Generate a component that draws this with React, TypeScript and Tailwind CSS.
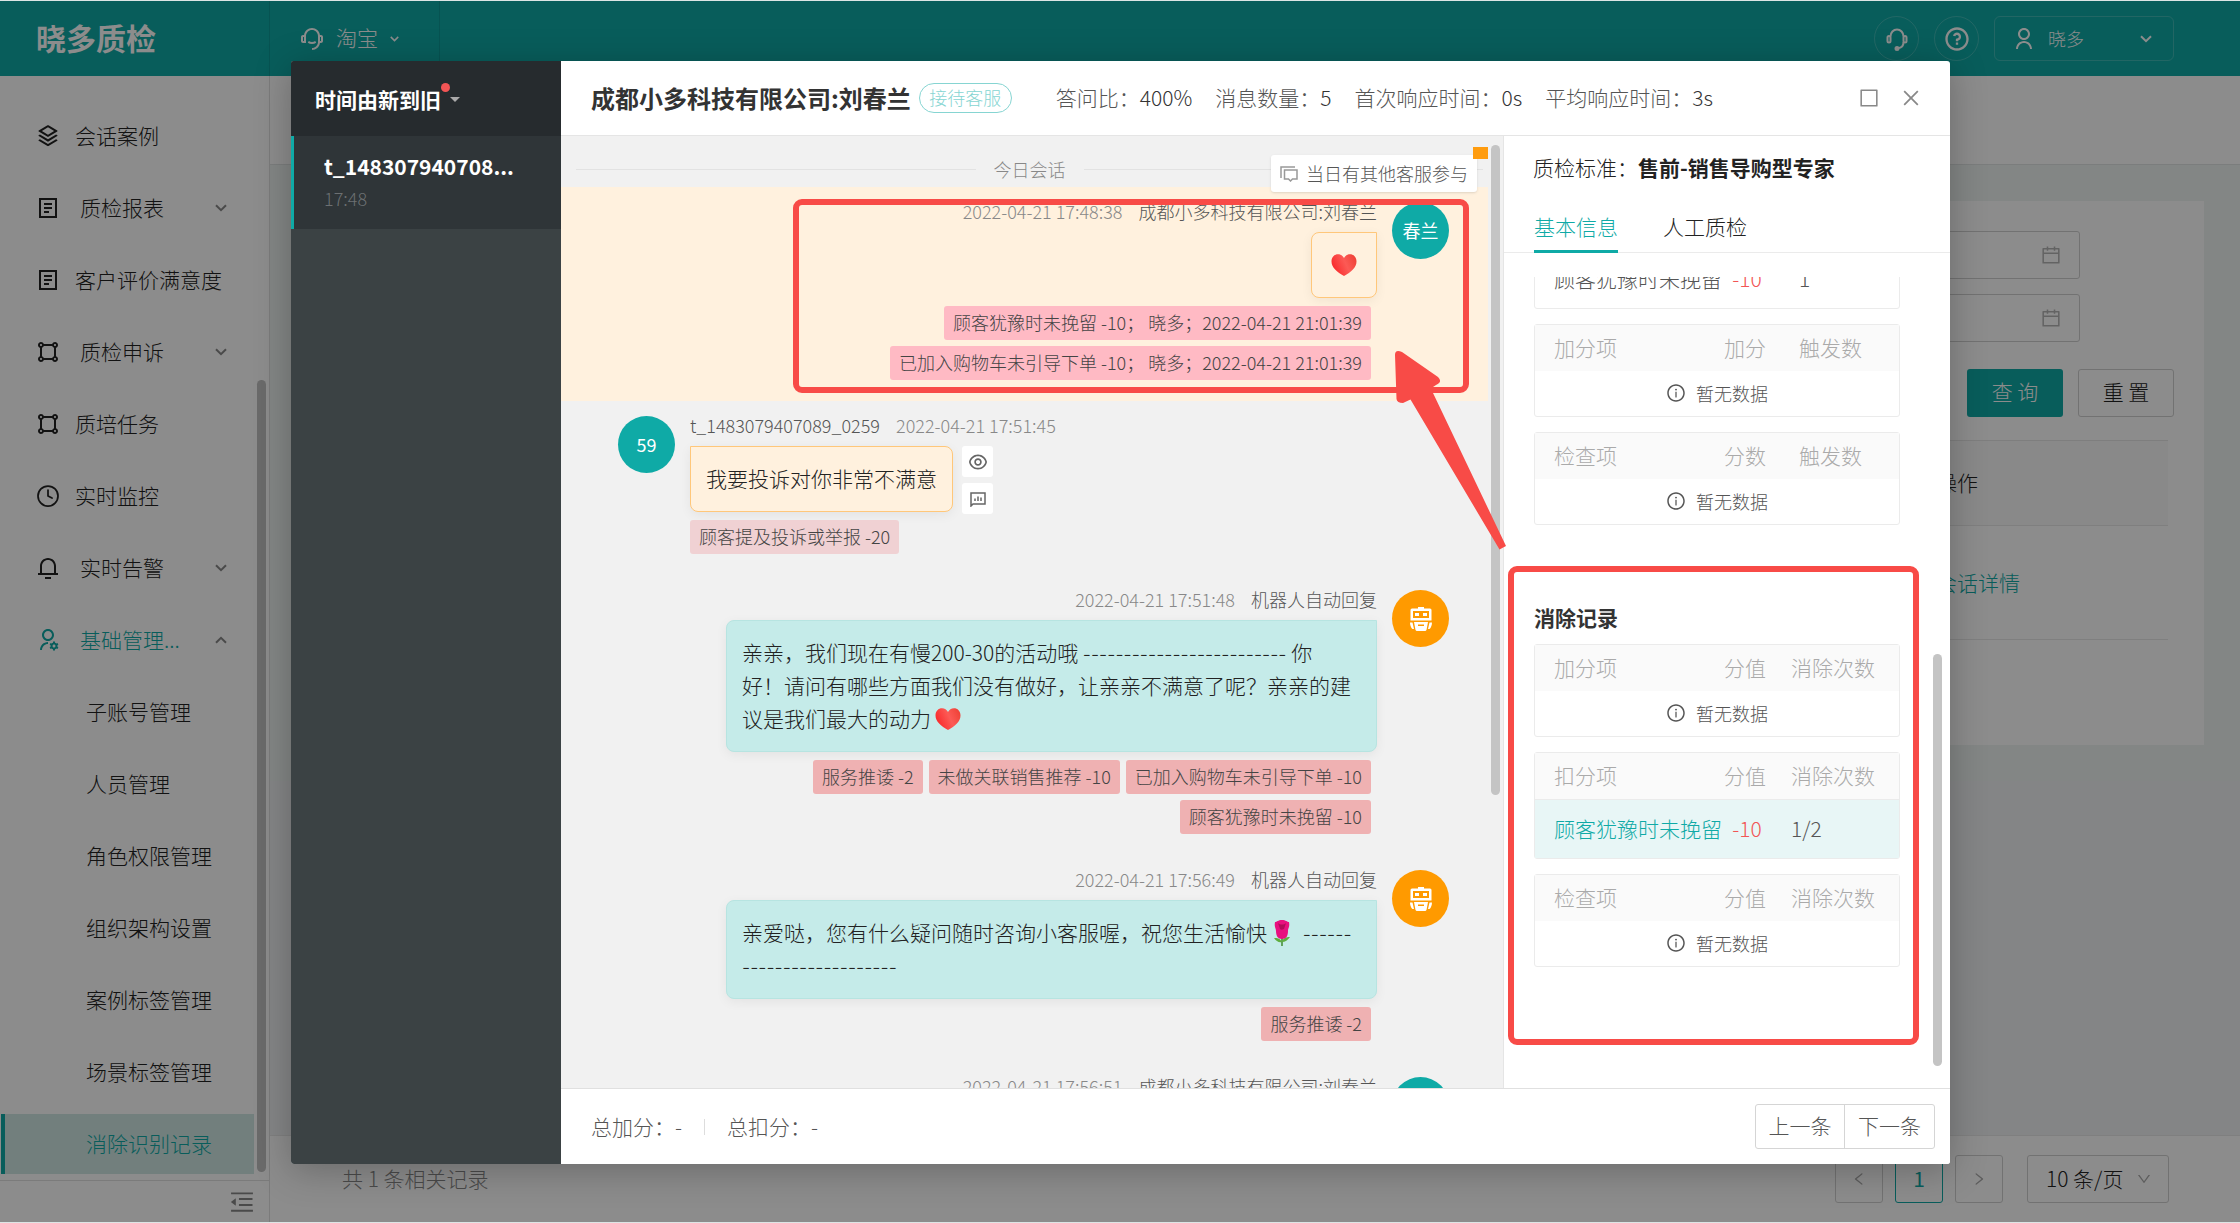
import React from 'react';
import { Clock } from 'lucide-react';
import { AiOutlineBorder, AiOutlineCalendar, AiOutlineClose, AiOutlineInfoCircle, AiOutlineLeft, AiOutlineMenuFold, AiOutlineRight, AiOutlineDown } from 'react-icons/ai';
import {
  RiCustomerService2Line,
  RiEyeLine,
  RiNotification3Line,
  RiQuestionLine,
  RiShapeLine,
  RiStackLine,
  RiUserLine,
  RiUserSettingsLine,
} from 'react-icons/ri';

interface IconProps {
  className?: string;
}

interface MenuItem {
  label: string;
  icon?: React.ComponentType<IconProps>;
  expand?: 'down' | 'up';
  active?: boolean;
}

const Report = ({ className }: IconProps) => (
  <svg viewBox="0 0 24 24" fill="none" stroke="currentColor" strokeWidth="2" className={className}>
    <path d="M4 3h16v18H4zM8 8h8M8 12h8M8 16h5" />
  </svg>
);

const ThinClock = ({ className }: IconProps) => <Clock strokeWidth={1.75} className={className} />;

const menuItems: MenuItem[] = [
  { label: '会话案例', icon: RiStackLine },
  { label: '质检报表', icon: Report, expand: 'down' },
  { label: '客户评价满意度', icon: Report },
  { label: '质检申诉', icon: RiShapeLine, expand: 'down' },
  { label: '质培任务', icon: RiShapeLine },
  { label: '实时监控', icon: ThinClock },
  { label: '实时告警', icon: RiNotification3Line, expand: 'down' },
  { label: '基础管理...', icon: RiUserSettingsLine, expand: 'up' },
  { label: '子账号管理' },
  { label: '人员管理' },
  { label: '角色权限管理' },
  { label: '组织架构设置' },
  { label: '案例标签管理' },
  { label: '场景标签管理' },
  { label: '消除识别记录', active: true },
];

const Chevron = ({ className }: IconProps) => (
  <svg viewBox="0 0 12 8" fill="none" stroke="currentColor" strokeWidth="2" className={className}>
    <path d="M1 1.2l5 5 5-5" />
  </svg>
);

const Headset = () => (
  <svg viewBox="0 0 22 24" fill="none" stroke="currentColor" strokeWidth="2" className="h-6 w-[22px]">
    <path d="M4.500 9.500a6.500 7 0 0 1 13 0M17.500 15c0 3.500-2 6-5.500 6" />
    <rect x="1.500" y="9" width="3" height="6.500" rx="1.500" />
    <rect x="17.500" y="9" width="3" height="6.500" rx="1.500" />
    <circle cx="11" cy="21.500" r="1.500" fill="currentColor" />
  </svg>
);

const Robot = () => (
  <svg viewBox="0 0 24 26" className="h-[26px] w-6">
    <path
      fill="#fff"
      fillRule="evenodd"
      d="M9 1h6v1.500h6a1.500 1.500 0 0 1 1.500 1.500v10.500h-21V4A1.500 1.500 0 0 1 3 2.500h6zM4 5v7h16V5z"
    />
    <path fill="#fff" d="M6 7h4v3H6zM14 7h4v3h-4zM1 16.500h2.500L5 23H3.500C2 22 1 19 1 16.500zM23 16.500h-2.500L19 23h1.500c1.500-1 2.500-4 2.500-6.500z" />
    <path fill="#fff" fillRule="evenodd" d="M5 16h14l-1.500 8-1 1h-9l-1-1zM9 18.500v1.500h6v-1.500z" />
  </svg>
);

const Heart = ({ className }: IconProps) => (
  <svg viewBox="0 0 26 22" className={className}>
    <defs>
      <linearGradient id="heart" x1="0" y1="0.600" x2="1" y2="0.200">
        <stop offset="0" stopColor="#f8282a" />
        <stop offset="0.550" stopColor="#fc5a55" />
        <stop offset="1" stopColor="#ef4136" />
      </linearGradient>
    </defs>
    <path fill="url(#heart)" d="M13 22C6 18 .5 13.500.5 7.500.5 3 3.500.3 7 .3c2.700 0 4.800 1.400 6 3.700C14.200 1.700 16.300.3 19 .3c3.500 0 6.500 2.700 6.500 7.200 0 6-5.500 10.500-12.500 14.500z" />
  </svg>
);

const Rose = () => (
  <svg viewBox="0 0 24 28" className="mr-1 ml-[3px] inline-block h-7 w-6 align-[-6px]">
    <path d="M12 17v10" stroke="#3f8a2e" strokeWidth="1.500" />
    <path fill="#5fae3f" d="M12 23c-3 1-6-1-8-4 3 0 6 0 8 4zM12 23c3 0 6-2 8-5-4 0-7 1-8 5z" />
    <path fill="#e8107f" d="M5 3c2 0 3-2 7-2s5 2 7 2c1 5-1 6-1 9 0 5-2 8-6 8s-6-3-6-8c0-3-2-4-1-9z" />
    <path fill="#b30a5a" d="M8 4c2 2 6 2 8 0l-2 6c-2 1-3 1-4 0z" />
  </svg>
);

const Dashes = ({ children }: { children: string }) => <span className="font-[Inter] text-lg leading-5">{children}</span>;

const ChatCopy = () => (
  <svg viewBox="0 0 18 16" fill="none" stroke="#999" strokeWidth="1.500" className="h-4 w-[18px]">
    <path d="M1 12V1h14M4.500 4h12.500v9h-4.500l-2 2-2-2h-4z" />
  </svg>
);

const ChartBubble = () => (
  <svg viewBox="0 0 16 16" fill="none" stroke="#666" strokeWidth="1.500" className="size-4">
    <path d="M1 15V2h14v11H3zM5 7.500V10M8 5.500V10M11 6.500V10" />
  </svg>
);

const TopBar = () => (
  <header className="flex h-[75px] shrink-0 items-stretch bg-[#0faaa6] text-white">
    <div className="flex w-[270px] items-center border-r border-black/10 pb-1 pl-9 text-3xl font-bold">晓多质检</div>
    <button type="button" className="flex w-[170px] items-center gap-3 border-r border-black/10 pl-[30px] text-[21px] font-light">
      <RiCustomerService2Line className="size-6" />
      <span className="pb-[2px]">淘宝</span>
      <Chevron className="h-[6px] w-[9px]" />
    </button>
    <div className="ml-auto flex items-center gap-[15px] pr-[66px]">
      <button type="button" aria-label="客服" className="flex size-[45px] items-center justify-center rounded-full border border-white/20">
        <Headset />
      </button>
      <button type="button" aria-label="帮助" className="flex size-[45px] items-center justify-center rounded-full border border-white/20">
        <RiQuestionLine className="size-7" />
      </button>
      <button type="button" className="flex h-[45px] w-[180px] items-center rounded-md border border-white/20 px-[17px] text-lg font-light">
        <RiUserLine className="size-6" />
        <span className="ml-3 pb-[2px]">晓多</span>
        <Chevron className="mr-1 ml-auto h-2 w-3" />
      </button>
    </div>
  </header>
);

const Sidebar = () => (
  <aside className="flex w-[270px] shrink-0 flex-col border-r border-[#e0e0e0] bg-white">
    <div className="flex min-h-0 flex-1 overflow-hidden">
      <nav className="mt-[30px] flex w-[254px] flex-col gap-3 pl-px">
        {menuItems.map((item) => (
          <a
            key={item.label}
            href="#"
            className={
              item.active
                ? 'flex h-[60px] shrink-0 items-center border-l-4 border-[#0faaa6] bg-[#cfe8e4] pl-[81px] text-[21px] font-light text-[#0faaa6]'
                : 'flex h-[60px] shrink-0 items-center pl-[35px] text-[21px] font-light text-[#222]'
            }
          >
            {item.icon && <item.icon className={item.expand === 'up' ? 'size-6 shrink-0 text-[#0faaa6]' : 'size-6 shrink-0'} />}
            <span
              className={
                item.active
                  ? ''
                  : !item.icon
                    ? 'pl-[50px]'
                    : item.expand === 'up'
                      ? 'ml-5 text-[#0faaa6]'
                      : item.expand
                        ? 'ml-5'
                        : 'ml-[15px]'
              }
            >
              {item.label}
            </span>
            {item.expand && (
              <Chevron className={item.expand === 'up' ? 'mr-[27px] ml-auto h-2 w-3 rotate-180 text-[#888]' : 'mr-[27px] ml-auto h-2 w-3 text-[#888]'} />
            )}
          </a>
        ))}
      </nav>
      <div className="mt-[304px] mb-2 ml-[3px] w-[9px] rounded-full bg-[#c1c1c1]" />
    </div>
    <div className="flex h-[42px] shrink-0 items-center justify-end border-t border-[#e0e0e0] pr-[13px]">
      <AiOutlineMenuFold className="size-7 text-[#888]" />
    </div>
  </aside>
);

const DateField = ({ label }: { label: string }) => (
  <label className="flex h-12 w-[420px] items-center justify-end rounded-[3px] border border-[#d0d0d0] bg-white pr-[17px]">
    <input type="text" aria-label={label} className="min-w-0 flex-1 outline-none" />
    <AiOutlineCalendar className="size-[22px] text-[#b5b5b5]" />
  </label>
);

const RecordPage = () => (
  <main className="flex min-w-0 flex-1 flex-col bg-[#eff4f3]">
    <div className="h-[89px] shrink-0 border-b border-[#e0e4e4] bg-white" />
    <section className="mx-9 mt-9 flex h-[544px] flex-col bg-white">
      <div className="flex flex-col items-end gap-[15px] pt-[30px] pr-[124px]">
        <DateField label="开始日期" />
        <DateField label="结束日期" />
      </div>
      <div className="mt-[27px] flex justify-end gap-[15px] pr-[30px] pb-[23px] text-[21px] font-light">
        <button type="button" className="h-12 w-24 rounded-[3px] bg-[#0faaa6] pb-[2px] text-white">查 询</button>
        <button type="button" className="h-12 w-24 rounded-[3px] border border-[#d0d0d0] pb-[2px] text-[#222]">重 置</button>
      </div>
      <table className="ml-9 w-[calc(100%-72px)] table-fixed border-t border-[#e5e5e5] text-left text-[21px] text-[#222]">
        <thead>
          <tr className="h-[85px] border-b border-[#e8e8e8] bg-[#fafafa]">
            <th className="font-light" />
            <th className="w-[232px] font-light">操作</th>
          </tr>
        </thead>
        <tbody>
          <tr className="h-[114px] border-b border-[#e8e8e8]">
            <td />
            <td>
              <a href="#" className="font-light text-[#0faaa6]">会话详情</a>
            </td>
          </tr>
        </tbody>
      </table>
    </section>
    <div className="mt-9 flex-1 bg-[#f0f2f5]" />
    <footer className="flex h-[87px] shrink-0 items-center justify-between border-t border-[#e8e8e8] bg-white pr-[71px] pl-[72px] text-[21px] font-light text-[#222]">
      <p className="text-[#888]">共 1 条相关记录</p>
      <div className="flex gap-3">
        <button type="button" aria-label="上一页" className="flex size-12 items-center justify-center rounded-[3px] border border-[#d0d0d0] text-[#aaa]">
          <AiOutlineLeft className="size-4" />
        </button>
        <button type="button" className="size-12 rounded-[3px] border border-[#0faaa6] font-normal text-[#0faaa6]">1</button>
        <button type="button" aria-label="下一页" className="flex size-12 items-center justify-center rounded-[3px] border border-[#d0d0d0] text-[#aaa]">
          <AiOutlineRight className="size-4" />
        </button>
        <div className="relative ml-3">
          <select aria-label="每页条数" className="h-12 w-[142px] appearance-none rounded-[3px] border border-[#d0d0d0] bg-white pl-[18px]">
            <option>10 条/页</option>
          </select>
          <AiOutlineDown className="pointer-events-none absolute top-4 right-[17px] size-4 text-[#aaa]" />
        </div>
      </div>
    </footer>
  </main>
);

const SessionList = () => (
  <aside className="flex w-[270px] shrink-0 flex-col rounded-l-[3px] bg-[#3b4244]">
    <button type="button" className="flex h-[75px] items-center rounded-tl-[3px] bg-[#262b2e] pt-[2px] pl-6 text-[21px] font-bold text-white">
      时间由新到旧
      <span className="mb-6 size-[9px] rounded-full bg-[#f25555]" />
      <svg viewBox="0 0 10 5" className="h-[5px] w-[10px] fill-[#aaa]">
        <path d="M0 0h10l-5 5z" />
      </svg>
    </button>
    <a href="#" className="flex h-[93px] flex-col border-l-[3px] border-[#0faaa6] bg-[#2f3538] pt-[14px] pl-[30px]">
      <strong className="text-[21px] leading-8 text-white">t_148307940708...</strong>
      <time className="mt-[2px] text-lg leading-7 font-light text-[#6c7072]">17:48</time>
    </a>
  </aside>
);

const stats = [
  { label: '答问比：', value: '400%' },
  { label: '消息数量：', value: '5' },
  { label: '首次响应时间：', value: '0s' },
  { label: '平均响应时间：', value: '3s' },
];

const ModalHeader = () => (
  <header className="flex h-[75px] shrink-0 items-center border-b border-[#e5e5e5] pr-7 pl-[30px]">
    <h1 className="text-2xl font-bold text-[#333]">成都小多科技有限公司:刘春兰</h1>
    <span className="ml-2 flex h-[30px] w-[93px] items-center justify-center rounded-full border border-[#86d5d2] pb-[2px] text-lg font-light text-[#86d5d2]">
      接待客服
    </span>
    <dl className="ml-11 flex gap-[23px] text-[21px] font-light">
      {stats.map((stat) => (
        <div key={stat.label} className="flex">
          <dt className="text-[#555]">{stat.label}</dt>
          <dd className="text-[#333]">{stat.value}</dd>
        </div>
      ))}
    </dl>
    <button type="button" aria-label="最大化" className="ml-auto text-[#888]">
      <AiOutlineBorder className="size-[22px]" />
    </button>
    <button type="button" aria-label="关闭" className="ml-5 text-[#888]">
      <AiOutlineClose className="size-[22px]" />
    </button>
  </header>
);

interface MessageProps {
  avatar: React.ReactNode;
  color?: 'teal' | 'orange';
  side?: 'left' | 'right';
  name: string;
  time: string;
  tags?: string[];
  tagTone?: 'pink' | 'rose' | 'pale';
  marked?: boolean;
  bubbleClass?: string;
  actions?: React.ReactNode;
  children?: React.ReactNode;
}

const tagTones = {
  pink: 'bg-[#ffbac4]',
  rose: 'bg-[#efb1b2]',
  pale: 'bg-[#f0d1d3]',
};

const Message: React.FC<MessageProps> = ({
  avatar,
  color = 'teal',
  side = 'right',
  name,
  time,
  tags = [],
  tagTone = 'rose',
  marked,
  bubbleClass = 'w-[651px] border-[#b7e4e1] bg-[#c5ebe9]',
  actions,
  children,
}) => {
  const right = side === 'right';
  return (
    <article className={marked ? 'relative bg-[#fff1de] pt-[15px] pb-[21px]' : 'pt-[15px] pb-[21px]'}>
      <div className={right ? 'flex flex-row-reverse gap-[15px] pr-[39px]' : 'flex gap-[15px] pl-[57px]'}>
        <div
          className={
            color === 'teal'
              ? 'flex size-[57px] shrink-0 items-center justify-center rounded-full bg-[#0faaa6] pb-[2px] text-lg text-white'
              : 'flex size-[57px] shrink-0 items-center justify-center rounded-full bg-[#ff9a00]'
          }
        >
          {avatar}
        </div>
        <div className={right ? 'flex w-[651px] flex-col items-end' : 'flex flex-col items-start'}>
          <div className={right ? 'mb-3 flex h-[18px] flex-row-reverse gap-4 text-lg leading-[18px] font-light' : 'mb-3 flex h-[18px] gap-4 text-lg leading-[18px] font-light'}>
            <span className="text-[#555]">{name}</span>
            <time className="text-[#888]">{time}</time>
          </div>
          {children && (
            <div className="flex items-start gap-[9px]">
              <div
                className={`rounded-lg border px-[15px] pt-[15px] pb-4 text-[21px] leading-[33px] font-light whitespace-pre-line text-[#222] shadow-[0_3px_12px_rgba(0,0,0,0.06)] ${right ? 'rounded-tr-none' : 'rounded-tl-none'} ${bubbleClass}`}
              >
                {children}
              </div>
              {actions}
            </div>
          )}
          {tags.length > 0 && (
            <div className={right ? 'mt-2 flex flex-wrap justify-end gap-[6px] pr-[6px]' : 'mt-[6px] flex flex-wrap gap-[6px]'}>
              {tags.map((tag) => (
                <span key={tag} className={`flex h-[34px] items-center rounded-[3px] px-[9px] pb-[2px] text-lg font-light text-[#444] ${tagTones[tagTone]}`}>
                  {tag}
                </span>
              ))}
            </div>
          )}
        </div>
      </div>
      {marked && <div className="pointer-events-none absolute top-3 right-[19px] bottom-2 left-[232px] rounded-[9px] border-[6px] border-[#f84b47]" />}
    </article>
  );
};

const ChatPane = () => (
  <section className="relative flex min-h-0 w-[942px] shrink-0 overflow-hidden bg-[#f1f1f1]">
    <div className="min-w-0 flex-1">
      <div className="flex h-[51px] items-center gap-[18px] pt-[15px] pr-[5px] pl-[15px] text-lg font-light text-[#888]">
        <span className="h-px flex-1 bg-[#e2e2e2]" />
        今日会话
        <span className="h-px flex-1 bg-[#e2e2e2]" />
      </div>
      <Message
        avatar="春兰"
        name="成都小多科技有限公司:刘春兰"
        time="2022-04-21 17:48:38"
        marked
        tagTone="pink"
        tags={['顾客犹豫时未挽留 -10； 晓多；2022-04-21 21:01:39', '已加入购物车未引导下单 -10； 晓多；2022-04-21 21:01:39']}
        bubbleClass="flex w-[66px] h-[66px] items-center justify-center border-[#ffc77a] bg-[#fff1de]"
      >
        <Heart className="h-[22px] w-[26px] shrink-0" />
      </Message>
      <Message
        avatar="59"
        side="left"
        name="t_1483079407089_0259"
        time="2022-04-21 17:51:45"
        tagTone="pale"
        tags={['顾客提及投诉或举报 -20']}
        bubbleClass="border-[#ffc77a] bg-[#fff1de]"
        actions={
          <div className="flex flex-col gap-[6px]">
            <button type="button" aria-label="查看" className="flex size-[31px] items-center justify-center rounded-[3px] bg-white text-[#666]">
              <RiEyeLine className="size-5" />
            </button>
            <button type="button" aria-label="分析" className="flex size-[31px] items-center justify-center rounded-[3px] bg-white">
              <ChartBubble />
            </button>
          </div>
        }
      >
        我要投诉对你非常不满意
      </Message>
      <Message
        avatar={<Robot />}
        color="orange"
        name="机器人自动回复"
        time="2022-04-21 17:51:48"
        tags={['服务推诿 -2', '未做关联销售推荐 -10', '已加入购物车未引导下单 -10', '顾客犹豫时未挽留 -10']}
      >
        亲亲，我们现在有慢200-30的活动哦 <Dashes>-------------------------</Dashes>
        {' 你\n好！请问有哪些方面我们没有做好，让亲亲不满意了呢？亲亲的建\n议是我们最大的动力'}
        <Heart className="ml-1 inline-block h-[22px] w-[26px] align-[-3px]" />
      </Message>
      <Message avatar={<Robot />} color="orange" name="机器人自动回复" time="2022-04-21 17:56:49" tags={['服务推诿 -2']}>
        亲爱哒，您有什么疑问随时咨询小客服喔，祝您生活愉快
        <Rose /> <Dashes>------</Dashes>
        {'\n'}
        <Dashes>-------------------</Dashes>
      </Message>
      <Message avatar="春兰" name="成都小多科技有限公司:刘春兰" time="2022-04-21 17:56:51" />
    </div>
    <div className="mt-[9px] ml-[3px] h-[650px] w-[9px] shrink-0 rounded-full bg-[#c4c4c4]" />
    <div className="w-[3px] shrink-0" />
    <button
      type="button"
      className="absolute top-[19px] left-[710px] flex h-[37px] items-center gap-2 rounded-[3px] bg-white px-[9px] text-lg font-light text-[#555] shadow-sm"
    >
      <ChatCopy />
      <span className="pb-[2px]">当日有其他客服参与</span>
    </button>
    <span className="absolute top-[11px] left-[912px] h-3 w-[15px] bg-[#ff9c0f]" />
  </section>
);

interface ScoreTableProps {
  head?: [string, string, string];
  row?: [string, string, string];
  highlight?: boolean;
  wide?: boolean;
}

const ScoreTable: React.FC<ScoreTableProps> = ({ head, row, highlight, wide }) => (
  <div className="rounded-[3px] border border-[#ebebeb]">
    <table className="w-full table-fixed text-left text-[21px] text-[#555]">
      <colgroup>
        <col className="w-[188px]" />
        <col className="w-11" />
        <col />
      </colgroup>
      {head && (
        <thead>
          <tr className="h-[46px] bg-[#fafafa] text-[#aaa]">
            <th className="pl-[19px] font-light">{head[0]}</th>
            <th className="text-center font-light whitespace-nowrap">{head[1]}</th>
            <th className={wide ? 'pl-6 font-light' : 'pl-8 font-light'}>{head[2]}</th>
          </tr>
        </thead>
      )}
      <tbody>
        {row ? (
          <tr className={highlight ? 'h-[59px] border-t border-[#ebebeb] bg-[#e8f6f6]' : 'h-[58px]'}>
            <td className={highlight ? 'pl-[19px] font-light whitespace-nowrap text-[#0faaa6]' : 'pl-[19px] font-light whitespace-nowrap'}>
              {row[0]}
            </td>
            <td className="pl-1 text-center font-light text-[#f25555]">{row[1]}</td>
            <td className={wide ? 'pl-6 font-light' : 'pl-8 font-light'}>{row[2]}</td>
          </tr>
        ) : (
          <tr className="h-[45px]">
            <td colSpan={3} className="pb-[2px] text-lg font-light">
              <span className="flex items-center justify-center gap-[10px]">
                <AiOutlineInfoCircle className="size-5" />
                暂无数据
              </span>
            </td>
          </tr>
        )}
      </tbody>
    </table>
  </div>
);

const ScorePanel = () => (
  <section className="flex min-w-0 flex-1 flex-col border-l border-[#e5e5e5] bg-white">
    <p className="pt-[15px] pl-[29px] text-[21px] leading-8 text-[#222]">
      <span className="font-light">质检标准：</span>
      <strong>售前-销售导购型专家</strong>
    </p>
    <div role="tablist" className="mt-[18px] flex h-[52px] shrink-0 gap-[45px] border-b border-[#ebebeb] pl-[30px] text-[21px] font-light text-[#222]">
      <button type="button" role="tab" aria-selected="true" className="-mb-px border-b-[3px] border-[#0faaa6] pt-[2px] text-[#0faaa6]">
        基本信息
      </button>
      <button type="button" role="tab" aria-selected="false" className="-mb-px border-b-[3px] border-transparent pt-[2px]">
        人工质检
      </button>
    </div>
    <div className="mt-6 flex min-h-0 flex-1 overflow-hidden">
      <div className="-mt-7 ml-[30px] flex w-[366px] shrink-0 flex-col gap-[15px]">
        <ScoreTable row={['顾客犹豫时未挽留', '-10', '1']} />
        <ScoreTable head={['加分项', '加分', '触发数']} />
        <ScoreTable head={['检查项', '分数', '触发数']} />
        <section className="relative mt-[62px] flex flex-col gap-[15px]">
          <h2 className="-mb-[3px] text-[21px] leading-[30px] font-bold text-[#333]">消除记录</h2>
          <ScoreTable head={['加分项', '分值', '消除次数']} wide />
          <ScoreTable head={['扣分项', '分值', '消除次数']} row={['顾客犹豫时未挽留', '-10', '1/2']} highlight wide />
          <ScoreTable head={['检查项', '分值', '消除次数']} wide />
          <div className="pointer-events-none absolute -top-9 -right-[19px] -bottom-[78px] -left-[26px] rounded-[9px] border-[6px] border-[#f84b47]" />
        </section>
      </div>
      <div className="mt-auto mr-2 mb-[22px] ml-auto h-[412px] w-[9px] rounded-full bg-[#c4c4c4]" />
    </div>
  </section>
);

const ModalFooter = () => (
  <footer className="flex h-[76px] shrink-0 items-center rounded-br-[3px] border-t border-[#e0e0e0] bg-white pr-[15px] pl-[30px] text-[21px] font-light text-[#555]">
    <span>总加分：-</span>
    <span className="mx-[22px] h-4 w-px bg-[#ddd]" />
    <span>总扣分：-</span>
    <div className="ml-auto flex h-[45px] rounded-[3px] border border-[#d5d5d5]">
      <button type="button" className="w-[89px] border-r border-[#d5d5d5] pb-[2px]">上一条</button>
      <button type="button" className="w-[89px] pb-[2px]">下一条</button>
    </div>
  </footer>
);

const App: React.FC = () => (
  <div className="relative flex h-screen flex-col overflow-hidden bg-[#dde5e5] py-px font-['Noto_Sans_CJK_SC',sans-serif]">
    <TopBar />
    <div className="flex min-h-0 flex-1">
      <Sidebar />
      <RecordPage />
    </div>
    <div className="absolute inset-x-0 inset-y-px flex bg-black/45 pt-[60px] pr-[290px] pb-[58px] pl-[291px]">
      <div role="dialog" aria-label="会话详情" className="relative flex min-w-0 flex-1 rounded-[3px] bg-white shadow-[0_6px_36px_rgba(0,0,0,0.25)]">
        <SessionList />
        <div className="flex min-w-0 flex-1 flex-col">
          <ModalHeader />
          <div className="flex min-h-0 flex-1">
            <ChatPane />
            <ScorePanel />
          </div>
          <ModalFooter />
        </div>
        <svg viewBox="0 0 140 220" className="pointer-events-none absolute top-[279px] left-[1089px] h-[220px] w-[140px]">
          <path fill="#f84b47" d="M15 15q0-6 7-3l36 25q5 5-2 8l-3 2v6l73 153-6.500 3.500L30.500 59.500 23 63q-6 0-6.500-4z" />
        </svg>
      </div>
    </div>
  </div>
);

export default App;
